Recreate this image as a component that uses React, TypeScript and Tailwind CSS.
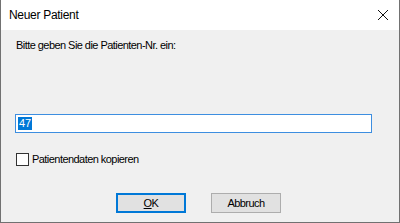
export default function App() {
  return (
    <div
      className="w-[400px] h-[223px] flex flex-col bg-[#f0f0f0] border-x border-b border-[#717171] overflow-hidden"
      style={{ fontFamily: '"Liberation Sans", Arial, sans-serif' }}
    >
      {/* Title bar */}
      <div className="h-[30px] shrink-0 bg-white flex items-center justify-between pl-[8px] pr-[9px]">
        <span className="text-[12px] text-black leading-none tracking-[-0.3px]">Neuer Patient</span>
        <svg width="12" height="12" viewBox="0 0 12 12" className="mr-[1px]">
          <path d="M1 1L11 11M11 1L1 11" stroke="#111" strokeWidth="1" fill="none" />
        </svg>
      </div>

      {/* Body */}
      <div className="flex flex-col pl-[14px] pr-[27px] text-[11px] text-black tracking-[-0.55px]">
        <div className="mt-[9px] h-[13px] leading-[13px] pl-[1px]">
          Bitte geben Sie die Patienten-Nr. ein:
        </div>

        <div className="mt-[62px] h-[19px] bg-white border border-[#3d8ee0] flex items-center pl-[2px]">
          <span className="bg-[#0078d7] text-white leading-[13px] px-[1px] tracking-normal">47</span>
        </div>

        <label className="mt-[20px] h-[13px] flex items-center gap-[3px] pl-[1px]">
          <span className="w-[13px] h-[13px] bg-white border border-[#333]" />
          <span className="leading-[13px]">Patientendaten kopieren</span>
        </label>

        <div className="mt-[27px] flex pl-[101px] gap-[25px]">
          <button className="w-[70px] h-[20px] bg-[#e1e1e1] border-2 border-[#0078d7] flex items-center justify-center leading-none">
            <span>
              <span className="underline">O</span>K
            </span>
          </button>
          <button className="w-[70px] h-[20px] bg-[#e1e1e1] border border-[#adadad] flex items-center justify-center leading-none">
            Abbruch
          </button>
        </div>
      </div>
    </div>
  )
}
